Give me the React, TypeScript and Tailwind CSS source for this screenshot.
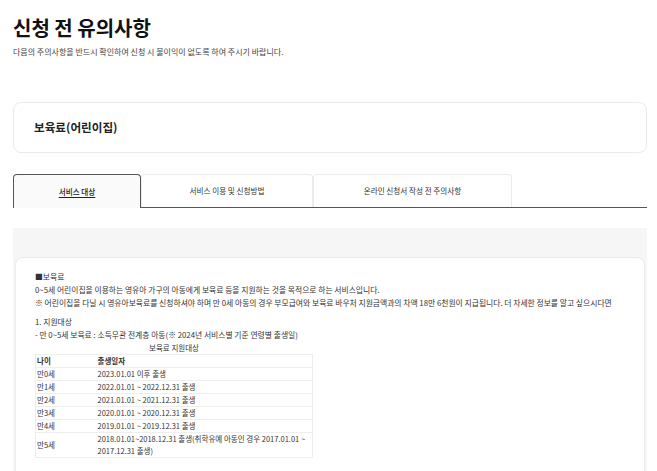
const rows = [
  { age: "만0세", date: "2023.01.01 이후 출생" },
  { age: "만1세", date: "2022.01.01 ~ 2022.12.31 출생" },
  { age: "만2세", date: "2021.01.01 ~ 2021.12.31 출생" },
  { age: "만3세", date: "2020.01.01 ~ 2020.12.31 출생" },
  { age: "만4세", date: "2019.01.01 ~ 2019.12.31 출생" },
  {
    age: "만5세",
    date: "2018.01.01~2018.12.31 출생(취학유예 아동인 경우 2017.01.01 ~ 2017.12.31 출생)",
  },
];

const tabs = [
  { label: "서비스 대상", width: "w-[128px]" },
  { label: "서비스 이용 및 신청방법", width: "w-[172px]" },
  { label: "온라인 신청서 작성 전 주의사항", width: "w-[199px]" },
];

export default function App() {
  return (
    <div className="w-[657px] h-[471px] overflow-hidden bg-white pl-[13px] pr-[10px] font-['Noto_Sans_CJK_KR',sans-serif] text-[#333]">
      {/* Header */}
      <h1 className="pt-[14px] text-[20px] font-bold leading-[28px] text-[#111]">신청 전 유의사항</h1>
      <p className="mt-[4px] text-[8px] leading-[12px] text-[#444]">
        다음의 주의사항을 반드시 확인하여 신청 시 불이익이 없도록 하여 주시기 바랍니다.
      </p>

      {/* Service name */}
      <div className="mt-[44px] flex h-[51px] items-center rounded-[8px] border border-[#ebebeb] pl-[20px]">
        <span className="text-[11.6px] font-bold text-[#222]">보육료(어린이집)</span>
      </div>

      {/* Tabs */}
      <div className="mt-[21px] flex h-[34px]">
        {tabs.map((tab, i) =>
          i === 0 ? (
            <div
              key={tab.label}
              className={`${tab.width} flex items-center justify-center rounded-t-[4px] border border-b-0 border-[#555] bg-[#fafafa]`}
            >
              <span className="text-[7.6px] font-medium text-[#222] underline underline-offset-2">{tab.label}</span>
            </div>
          ) : (
            <div key={tab.label} className="flex flex-col">
              <div
                className={`${tab.width} flex flex-1 items-center justify-center rounded-t-[4px] border border-b-0 border-[#ececec] bg-white`}
              >
                <span className="text-[7.6px] text-[#333]">{tab.label}</span>
              </div>
              <div className="h-px bg-[#555]" />
            </div>
          )
        )}
        <div className="flex flex-1 flex-col justify-end">
          <div className="h-px bg-[#555]" />
        </div>
      </div>

      {/* Content */}
      <div className="mt-[20px] h-[300px] bg-[#f6f6f6] px-[2px] pt-[29px]">
        <div className="h-[300px] rounded-[8px] border border-[#ebebeb] bg-white pl-[19px] pt-[12px] text-[7.8px] leading-[13px]">
          <p>■보육료</p>
          <p>0~5세 어린이집을 이용하는 영유아 가구의 아동에게 보육료 등을 지원하는 것을 목적으로 하는 서비스입니다.</p>
          <p className="whitespace-nowrap">
            ※ 어린이집을 다닐 시 영유아보육료를 신청하셔야 하며 만 0세 아동의 경우 부모급여와 보육료 바우처 지원금액과의 차액 18만 6천원이 지급됩니다. 더 자세한 정보를 알고 싶으시다면
          </p>
          <p className="mt-[6px]">1. 지원대상</p>
          <p>- 만 0~5세 보육료 : 소득무관 전계층 아동(※ 2024년 서비스별 기준 연령별 출생일)</p>
          <table className="w-[278px] border-collapse text-[7.5px]">
            <caption className="leading-[13px]">보육료 지원대상</caption>
            <tbody>
              <tr className="border border-[#eee] font-bold">
                <td className="w-[61px] px-[1px] leading-[12px]">나이</td>
                <td className="px-[1px] leading-[12px]">출생일자</td>
              </tr>
              {rows.map((r) => (
                <tr key={r.age} className="border border-[#eee]">
                  <td className="px-[1px] leading-[12px]">{r.age}</td>
                  <td className="px-[1px] leading-[12px]">{r.date}</td>
                </tr>
              ))}
            </tbody>
          </table>
        </div>
      </div>
    </div>
  );
}
